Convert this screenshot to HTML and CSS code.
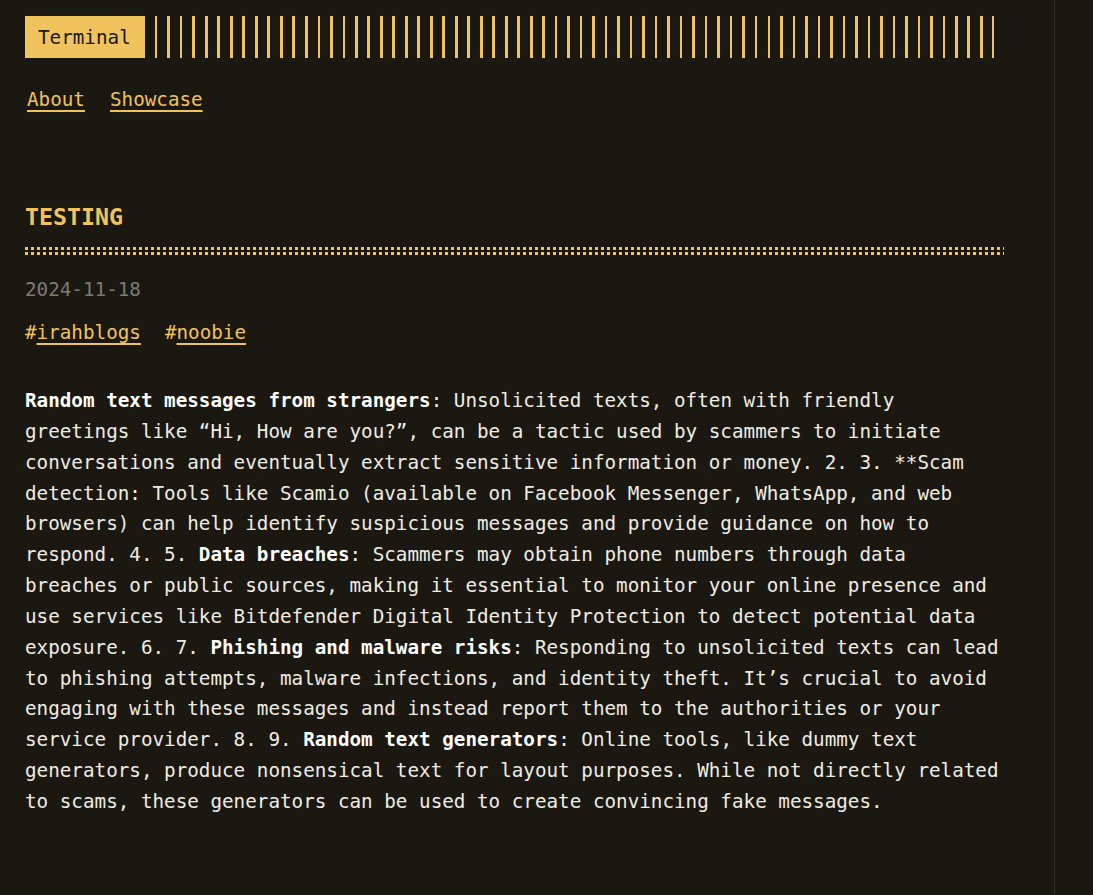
FILE: index.html
```html
<!DOCTYPE html>
<html lang="en">
<head>
<meta charset="utf-8">
<title>TESTING</title>
<link rel="stylesheet" href="styles.css">
</head>
<body>
<div class="container">
  <header class="header">
    <div class="header-inner">
      <a class="logo" href="#">Terminal</a>
      <div class="stripes"></div>
    </div>
    <nav class="menu">
      <a href="#">About</a>
      <a href="#">Showcase</a>
    </nav>
  </header>
  <main class="post">
    <h1 class="post-title">TESTING</h1>
    <div class="dots"><div class="dot-row"></div><div class="dot-row"></div></div>
    <div class="post-date">2024-11-18</div>
    <div class="post-tags">
      <span class="tag">#<a href="#">irahblogs</a></span>
      <span class="tag">#<a href="#">noobie</a></span>
    </div>
    <p class="post-content"><strong>Random text messages from strangers</strong>: Unsolicited texts, often with friendly greetings like “Hi, How are you?”, can be a tactic used by scammers to initiate conversations and eventually extract sensitive information or money. 2. 3. **Scam detection: Tools like Scamio (available on Facebook Messenger, WhatsApp, and web browsers) can help identify suspicious messages and provide guidance on how to respond. 4. 5. <strong>Data breaches</strong>: Scammers may obtain phone numbers through data breaches or public sources, making it essential to monitor your online presence and use services like Bitdefender Digital Identity Protection to detect potential data exposure. 6. 7. <strong>Phishing and malware risks</strong>: Responding to unsolicited texts can lead to phishing attempts, malware infections, and identity theft. It’s crucial to avoid engaging with these messages and instead report them to the authorities or your service provider. 8. 9. <strong>Random text generators</strong>: Online tools, like dummy text generators, produce nonsensical text for layout purposes. While not directly related to scams, these generators can be used to create convincing fake messages.</p>
  </main>
</div>
</body>
</html>
```

FILE: styles.css
```css
html, body {
  margin: 0;
  padding: 0;
  background: #1b1811;
}

body {
  color: #efece4;
  font-family: "DejaVu Sans Mono", "Liberation Mono", monospace;
  font-size: 19.25px;
  line-height: 31px;
}

.container {
  box-sizing: border-box;
  width: 1055px;
  min-height: 100vh;
  padding: 16px 50px 40px 25px;
  border-right: 1px solid #342e1f;
}

.header-inner {
  display: flex;
  align-items: stretch;
  height: 42px;
}

.logo {
  display: block;
  background: #f0c35c;
  color: #1b1811;
  text-decoration: none;
  padding: 0 14px 0 13px;
  line-height: 43px;
}

.stripes {
  flex: 1;
  margin: 0 10px 0 10px;
  background: repeating-linear-gradient(90deg, #f0c35c 0, #f0c35c 2.5px, transparent 2.5px, transparent 12.5px);
}

.menu {
  display: flex;
  gap: 25px;
  margin-top: 26px;
  padding-left: 2px;
}

a {
  color: #f0c35c;
  text-decoration: underline;
  text-decoration-thickness: 2px;
  text-underline-offset: 4px;
}

.post-title {
  margin: 87px 0 0 0;
  color: #f0c35c;
  font-size: 23.25px;
  line-height: 30px;
  font-weight: bold;
  padding-bottom: 15px;
}

.dots {
  display: flex;
  flex-direction: column;
  gap: 2px;
}

.dot-row {
  height: 3px;
  background: repeating-linear-gradient(90deg, #f0c35c 0, #f0c35c 3px, transparent 3px, transparent 6px);
}

.post-date {
  margin-top: 19px;
  color: #7d7a72;
}

.post-tags {
  margin-top: 12px;
  display: flex;
  gap: 24px;
  color: #f0c35c;
}

.post-content {
  margin: 38px 0 0 0;
  line-height: 30.85px;
}

.post-content strong {
  color: #ffffff;
  font-weight: bold;
}
```
